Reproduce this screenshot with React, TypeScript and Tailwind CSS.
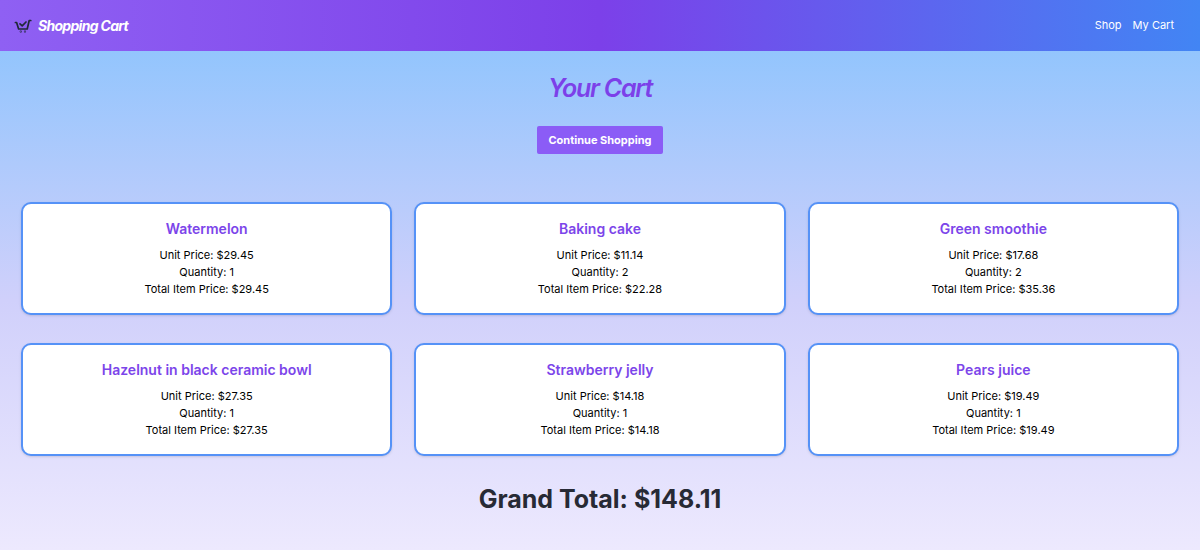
const items = [
  { name: "Watermelon", price: 29.45, quantity: 1 },
  { name: "Baking cake", price: 11.14, quantity: 2 },
  { name: "Green smoothie", price: 17.68, quantity: 2 },
  { name: "Hazelnut in black ceramic bowl", price: 27.35, quantity: 1 },
  { name: "Strawberry jelly", price: 14.18, quantity: 1 },
  { name: "Pears juice", price: 19.49, quantity: 1 },
];

type Item = (typeof items)[number];

function CartIcon() {
  return (
    <svg viewBox="0 0 18 16" className="h-4 w-[18px]" fill="none" stroke="#1f2937" strokeWidth="1.7" strokeLinecap="round" strokeLinejoin="round" aria-hidden="true">
      <path d="M1.4 4.5h1.2l2 6.5h8.6l2-8.5h1.6" />
      <path d="M6 5.8l2.2 2L12 4" />
      <circle cx="6.8" cy="13.6" r=".3" />
      <circle cx="11" cy="13.6" r=".3" />
    </svg>
  );
}

function Navbar() {
  return (
    <nav className="flex h-[51px] items-center justify-between bg-linear-to-r/srgb from-[#8f60f3] via-[#7c40e9] to-[#4285f4] pl-[14px] pr-[26px] text-white">
      <a href="#home" className="flex items-center gap-[6px] text-[14px] font-bold italic leading-5 tracking-tighter">
        <CartIcon />
        Shopping Cart
      </a>
      <div className="flex gap-[11px] text-[11px]">
        <a href="#shop">Shop</a>
        <a href="#cart">My Cart</a>
      </div>
    </nav>
  );
}

function CartCard({ item }: { item: Item }) {
  return (
    <article className="rounded-[10px] border-2 border-[#5592f7] bg-white px-4 py-[15px] text-center text-[11px] leading-[17px] text-black shadow-sm">
      <h2 className="mb-2 text-[14px] font-semibold leading-5 text-[#7c45ea]">{item.name}</h2>
      <p>Unit Price: ${item.price.toFixed(2)}</p>
      <p>Quantity: {item.quantity}</p>
      <p>Total Item Price: ${(item.price * item.quantity).toFixed(2)}</p>
    </article>
  );
}

export default function App() {
  const total = items.reduce((sum, item) => sum + item.price * item.quantity, 0);

  return (
    <div className="flex min-h-screen flex-col bg-[#ede9fe] font-['Inter',sans-serif]">
      <Navbar />
      <main className="flex grow flex-col items-center bg-linear-to-b/srgb from-[#93c5fd] via-[#d0d0fb] to-[#ede9fe] px-[21px] pb-8 pt-[21px]">
        <h1 className="text-[25px] font-semibold italic leading-8 tracking-tighter text-[#7c40e9]">Your Cart</h1>
        <button type="button" className="mt-[22px] h-7 rounded-xs bg-[#8b5cf6] px-[11px] text-[11px] font-bold text-white">
          Continue Shopping
        </button>
        <section className="mt-12 grid w-full grid-cols-3 gap-x-[22px] gap-y-7">
          {items.map((item) => (
            <CartCard key={item.name} item={item} />
          ))}
        </section>
        <p className="mt-[25px] text-[25px] font-bold leading-9 text-[#272a35]">Grand Total: ${total.toFixed(2)}</p>
      </main>
    </div>
  );
}
